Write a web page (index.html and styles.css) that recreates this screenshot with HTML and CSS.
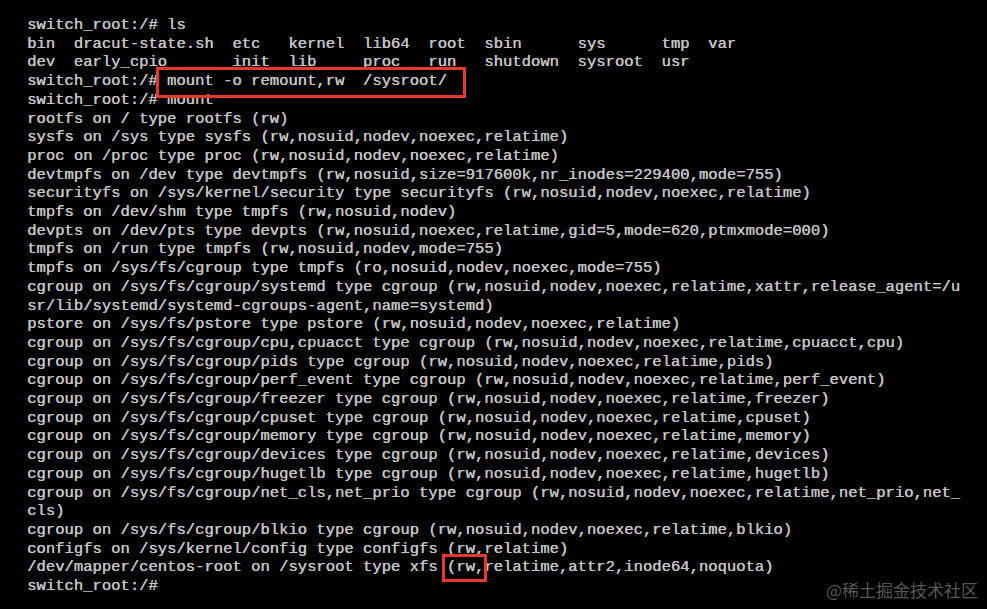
FILE: index.html
```html
<!DOCTYPE html>
<html>
<head>
<meta charset="utf-8">
<link rel="stylesheet" href="styles.css">
</head>
<body>
<div class="screen">
<pre class="console">switch_root:/# ls
bin  dracut-state.sh  etc   kernel  lib64  root  sbin      sys      tmp  var
dev  early_cpio       init  lib     proc   run   shutdown  sysroot  usr
switch_root:/# mount -o remount,rw  /sysroot/
switch_root:/# mount
rootfs on / type rootfs (rw)
sysfs on /sys type sysfs (rw,nosuid,nodev,noexec,relatime)
proc on /proc type proc (rw,nosuid,nodev,noexec,relatime)
devtmpfs on /dev type devtmpfs (rw,nosuid,size=917600k,nr_inodes=229400,mode=755)
securityfs on /sys/kernel/security type securityfs (rw,nosuid,nodev,noexec,relatime)
tmpfs on /dev/shm type tmpfs (rw,nosuid,nodev)
devpts on /dev/pts type devpts (rw,nosuid,noexec,relatime,gid=5,mode=620,ptmxmode=000)
tmpfs on /run type tmpfs (rw,nosuid,nodev,mode=755)
tmpfs on /sys/fs/cgroup type tmpfs (ro,nosuid,nodev,noexec,mode=755)
cgroup on /sys/fs/cgroup/systemd type cgroup (rw,nosuid,nodev,noexec,relatime,xattr,release_agent=/u
sr/lib/systemd/systemd-cgroups-agent,name=systemd)
pstore on /sys/fs/pstore type pstore (rw,nosuid,nodev,noexec,relatime)
cgroup on /sys/fs/cgroup/cpu,cpuacct type cgroup (rw,nosuid,nodev,noexec,relatime,cpuacct,cpu)
cgroup on /sys/fs/cgroup/pids type cgroup (rw,nosuid,nodev,noexec,relatime,pids)
cgroup on /sys/fs/cgroup/perf_event type cgroup (rw,nosuid,nodev,noexec,relatime,perf_event)
cgroup on /sys/fs/cgroup/freezer type cgroup (rw,nosuid,nodev,noexec,relatime,freezer)
cgroup on /sys/fs/cgroup/cpuset type cgroup (rw,nosuid,nodev,noexec,relatime,cpuset)
cgroup on /sys/fs/cgroup/memory type cgroup (rw,nosuid,nodev,noexec,relatime,memory)
cgroup on /sys/fs/cgroup/devices type cgroup (rw,nosuid,nodev,noexec,relatime,devices)
cgroup on /sys/fs/cgroup/hugetlb type cgroup (rw,nosuid,nodev,noexec,relatime,hugetlb)
cgroup on /sys/fs/cgroup/net_cls,net_prio type cgroup (rw,nosuid,nodev,noexec,relatime,net_prio,net_
cls)
cgroup on /sys/fs/cgroup/blkio type cgroup (rw,nosuid,nodev,noexec,relatime,blkio)
configfs on /sys/kernel/config type configfs (rw,relatime)
/dev/mapper/centos-root on /sysroot type xfs (rw,relatime,attr2,inode64,noquota)
<span class="last">switch_root:/#</span></pre>
<div class="mark mark-cmd"></div>
<div class="mark mark-rw"></div>
<div class="watermark">@稀土掘金技术社区</div>
</div>
</body>
</html>
```
FILE: styles.css
```css
html, body {
  margin: 0;
  padding: 0;
  background: #000;
}
.screen {
  position: relative;
  width: 987px;
  height: 609px;
  overflow: hidden;
  background: #000;
}
.console {
  margin: 0;
  padding: 16px 0 0 27px;
  font-family: "Liberation Mono", "DejaVu Sans Mono", monospace;
  font-size: 15.56px;
  line-height: 18.7px;
  color: #c4c4c4;
  white-space: pre;
  text-shadow: 0.4px 0 0 #c4c4c4;
}
.mark {
  position: absolute;
  border: 3px solid #e5392c;
  box-sizing: border-box;
}
.mark-cmd {
  left: 156px;
  top: 67px;
  width: 310px;
  height: 31px;
}
.mark-rw {
  left: 442px;
  top: 554px;
  width: 45px;
  height: 28px;
}
.watermark {
  position: absolute;
  right: 9px;
  bottom: 9px;
  font-family: "Noto Sans CJK SC", "Noto Sans", sans-serif;
  font-size: 17px;
  line-height: 20px;
  color: rgba(200, 200, 200, 0.45);
}
```
